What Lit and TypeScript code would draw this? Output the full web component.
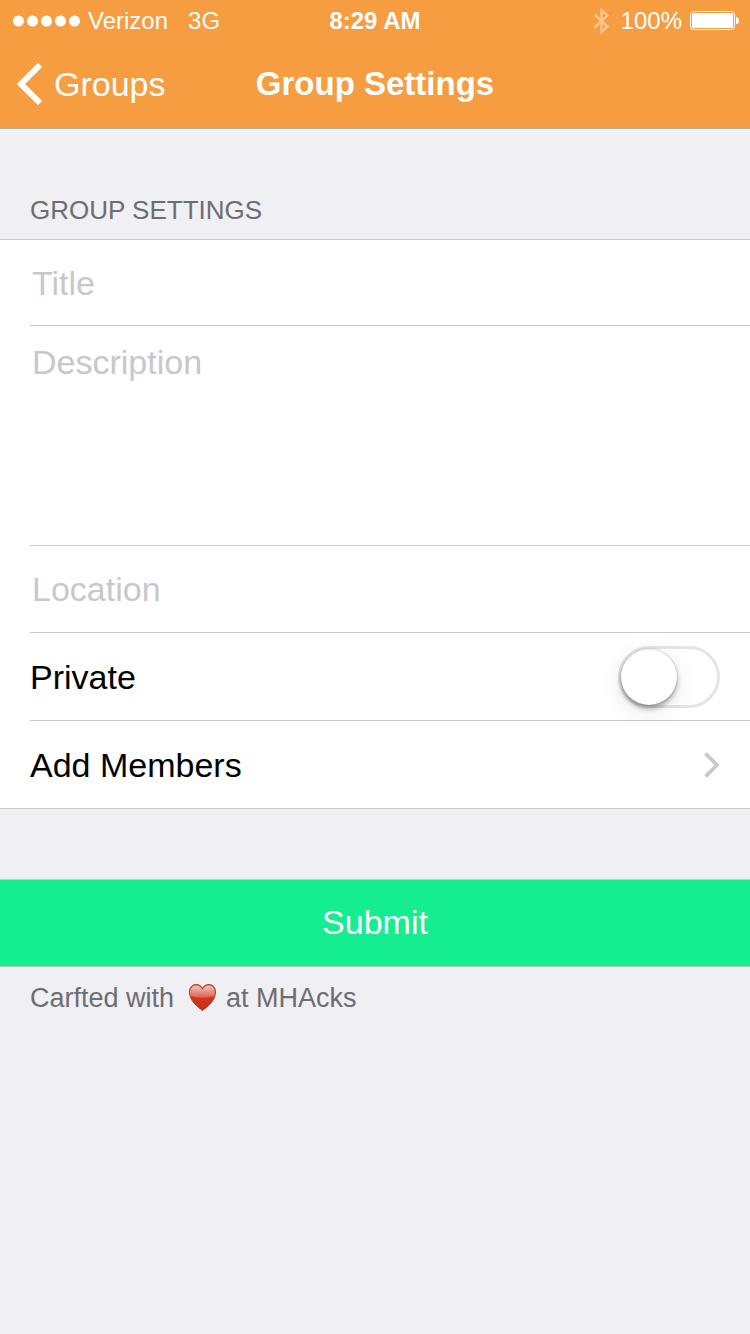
import { LitElement, html, svg, css } from "lit";
import { customElement, state } from "lit/decorators.js";

const dot = (i: number) => svg`<circle cx=${5.5 + i * 14} cy="6" r="5.5" />`;

@customElement("status-bar")
class StatusBar extends LitElement {
  static styles = css`
    :host {
      display: grid;
      grid-template-columns: 1fr auto 1fr;
      align-items: center;
      height: 38px;
      padding: 2px 11px 0;
      font-size: 24px;
      line-height: 28px;
    }
    .left,
    .right {
      display: flex;
      align-items: center;
    }
    .right {
      justify-content: flex-end;
    }
    .dots {
      margin: 0 8px 0 2px;
    }
    .network {
      margin-left: 20px;
    }
    .time {
      font-weight: 700;
    }
    .bluetooth {
      margin-right: 12px;
    }
    .battery {
      margin-left: 8px;
    }
    svg {
      display: block;
      flex: none;
    }
  `;

  render() {
    return html`
      <div class="left">
        <svg class="dots" width="67" height="12" viewBox="0 0 67 12" fill="#fff" aria-hidden="true">
          ${[0, 1, 2, 3, 4].map((i) => dot(i))}
        </svg>
        <span>Verizon</span>
        <span class="network">3G</span>
      </div>
      <span class="time">8:29 AM</span>
      <div class="right">
        <svg class="bluetooth" width="16" height="28" viewBox="0 0 16 28" fill="none" stroke="#fff" stroke-opacity="0.4" stroke-width="2.4" aria-hidden="true">
          <path d="M1.500 7.5 L14.5 19.5 L8.5 25 V3 L14.5 8.5 L1.500 20.5" />
        </svg>
        <span>100%</span>
        <svg class="battery" width="49" height="20" viewBox="0 0 49 20" aria-hidden="true">
          <rect x="0.5" y="0.5" width="44" height="18" rx="3.5" fill="none" stroke="#fff" />
          <rect x="2" y="2" width="41" height="15" rx="2" fill="#fff" />
          <path d="M46 6 H47 Q49 6.5 49 9.5 Q49 12.5 47 13 H46 Z" fill="#fff" />
        </svg>
      </div>
    `;
  }
}

@customElement("app-root")
class AppRoot extends LitElement {
  @state() private isPrivate = false;

  static styles = css`
    :host {
      display: block;
      min-height: 100vh;
      background: #efeff4;
      color: #000;
      font-family: "Liberation Sans", Arial, Helvetica, sans-serif;
      font-size: 34px;
      line-height: 40px;
    }
    * {
      box-sizing: border-box;
    }
    status-bar {
      box-sizing: content-box;
    }
    header {
      background: #f69d41;
      color: #fff;
      border-bottom: 1px solid #b2aca8;
    }
    .nav {
      display: grid;
      grid-template-columns: 1fr auto 1fr;
      align-items: center;
      height: 88px;
      padding: 0 16px;
    }
    .back {
      display: flex;
      align-items: center;
      gap: 11px;
      color: inherit;
      text-decoration: none;
    }
    h1 {
      margin: 0;
      font-size: 33px;
      font-weight: 700;
      line-height: 42px;
    }
    h2 {
      margin: 0;
      padding: 66px 30px 13px;
      color: #6d6d72;
      font-size: 26px;
      font-weight: 400;
      line-height: 31px;
      text-transform: uppercase;
    }
    .list {
      padding-left: 30px;
      background: #fff;
      border-top: 1px solid #c8c7cc;
      border-bottom: 1px solid #c8c7cc;
    }
    .row {
      display: flex;
      align-items: center;
      justify-content: space-between;
      min-height: 88px;
      padding-right: 30px;
      color: inherit;
      text-decoration: none;
    }
    .row + .row {
      border-top: 1px solid #c8c7cc;
    }
    .row.entry {
      min-height: 87px;
    }
    .row.entry:first-child {
      min-height: 85px;
    }
    .row.tall {
      height: 220px;
      align-items: stretch;
    }
    .field {
      display: block;
      width: 100%;
      margin: 0;
      padding: 0 2px;
      border: 0;
      outline: 0;
      background: none;
      color: inherit;
      font: inherit;
      resize: none;
    }
    textarea.field {
      padding-top: 16px;
    }
    .field::placeholder {
      color: #c7c7cd;
      opacity: 1;
    }
    .switch {
      appearance: none;
      display: flex;
      width: 102px;
      height: 62px;
      margin: 0;
      border: 3px solid #e5e5e5;
      border-radius: 31px;
      background: #fff;
    }
    .switch::before {
      content: "";
      width: 56px;
      height: 56px;
      border-radius: 50%;
      background: #fff;
      box-shadow: 0 4px 5px rgba(0, 0, 0, 0.3), 0 0 2px rgba(0, 0, 0, 0.3),
        0 6px 24px rgba(0, 0, 0, 0.1);
    }
    .switch:checked {
      justify-content: flex-end;
      border-color: #4cd964;
      background: #4cd964;
    }
    .submit {
      display: block;
      width: 100%;
      height: 88px;
      margin: 70px 0 0;
      padding: 0 0 2px;
      border: 0;
      border-top: 1px solid #b4d8c8;
      border-bottom: 1px solid #b4c8c0;
      background: #15ed91;
      color: #fff;
      font: inherit;
    }
    footer {
      display: flex;
      align-items: center;
      padding: 15px 30px;
      color: #6d6d72;
      font-size: 27px;
      line-height: 32px;
    }
    .heart {
      margin: 0 9px 0 14px;
    }
    svg {
      display: block;
      flex: none;
    }
  `;

  private toggle(e: Event) {
    this.isPrivate = (e.target as HTMLInputElement).checked;
  }

  render() {
    return html`
      <header>
        <status-bar></status-bar>
        <div class="nav">
          <a class="back" href="#groups">
            <svg width="27" height="42" viewBox="0 0 27 42" fill="none" stroke="#fff" stroke-width="6" aria-hidden="true">
              <path d="M24 2 L5 21 L24 40" />
            </svg>
            Groups
          </a>
          <h1>Group Settings</h1>
        </div>
      </header>
      <form @submit=${(e: Event) => e.preventDefault()}>
        <h2>Group Settings</h2>
        <div class="list">
          <div class="row entry">
            <input class="field" type="text" placeholder="Title" aria-label="Title" />
          </div>
          <div class="row tall">
            <textarea class="field" placeholder="Description" aria-label="Description"></textarea>
          </div>
          <div class="row entry">
            <input class="field" type="text" placeholder="Location" aria-label="Location" />
          </div>
          <div class="row">
            <label for="private">Private</label>
            <input class="switch" id="private" type="checkbox" role="switch" .checked=${this.isPrivate} @change=${this.toggle} />
          </div>
          <a class="row" href="#members">
            Add Members
            <svg width="16" height="26" viewBox="0 0 16 26" fill="none" stroke="#c7c7cc" stroke-width="3.8" aria-hidden="true">
              <path d="M1.5 1.5 L13 13 L1.5 24.5" />
            </svg>
          </a>
        </div>
        <button class="submit" type="submit">Submit</button>
      </form>
      <footer>
        <span>Carfted with</span>
        <svg class="heart" width="29" height="30" viewBox="0 0 29 30" role="img" aria-label="love">
          <defs>
            <linearGradient id="body" x1="0" y1="0" x2="0" y2="1">
              <stop offset="0" stop-color="#d4503e" />
              <stop offset="0.5" stop-color="#d4371c" />
              <stop offset="1" stop-color="#cb2c12" />
            </linearGradient>
            <linearGradient id="gloss" x1="0" y1="0" x2="0" y2="1">
              <stop offset="0" stop-color="#fff" stop-opacity="0.65" />
              <stop offset="1" stop-color="#fff" stop-opacity="0.2" />
            </linearGradient>
          </defs>
          <path d="M14.5 27.5 C9 23.5 1.5 17.5 1.5 9 C1.5 4 4.5 1.5 8 1.5 C11 1.5 13.5 3 14.5 5.5 C15.5 3 18 1.5 21 1.5 C24.5 1.5 27.5 4 27.5 9 C27.5 17.5 20 23.5 14.5 27.5 Z" fill="url(#body)" stroke="#b5402f" />
          <path d="M2.5 13 C1 6 4 2.5 8 2.5 C11 2.5 13.5 4.5 14.5 7 C15.5 4.5 18 2.5 21 2.5 C25 2.5 28 6 26.5 13 Q14.5 16.5 2.5 13 Z" fill="url(#gloss)" />
        </svg>
        <span>at MHAcks</span>
      </footer>
    `;
  }
}
